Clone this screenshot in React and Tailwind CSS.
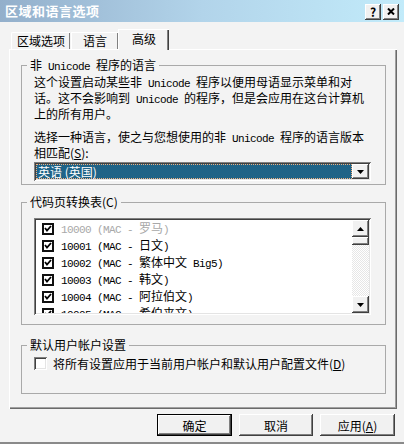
import React from 'react';

const FONT = { fontFamily: '"Noto Sans CJK SC", "Liberation Sans", sans-serif' };

const RAISED =
  'bg-[#f1f1f1] shadow-[inset_-1px_-1px_#404040,inset_1px_1px_#ffffff,inset_-2px_-2px_#808080]';
const SUNKEN =
  'shadow-[inset_1px_1px_#808080,inset_-1px_-1px_#ffffff,inset_2px_2px_#404040,inset_-2px_-2px_#e4e4e4]';

const CODE_PAGES = [
  { code: '10000', name: '罗马', muted: true },
  { code: '10001', name: '日文' },
  { code: '10002', name: '繁体中文', extra: ' Big5' },
  { code: '10003', name: '韩文' },
  { code: '10004', name: '阿拉伯文' },
  { code: '10005', name: '希伯来文' },
];

// latin runs in the bitmap font are fixed 6px wide
function L({ children }) {
  return (
    <span className="font-['Liberation_Mono',monospace] text-[11px] tracking-[-0.6px] whitespace-pre">
      {children}
    </span>
  );
}

function Arrow({ up }) {
  return (
    <svg width="7" height="4" viewBox="0 0 7 4" className="block">
      <path d={up ? 'M3.5 0 L7 4 L0 4 Z' : 'M0 0 L7 0 L3.5 4 Z'} fill="#000" />
    </svg>
  );
}

function GroupBox({ title, className, children }) {
  return (
    <div className={`relative mx-[11px] border border-[#a9a9a9] ${className}`}>
      <span className="absolute left-[5px] -top-[8px] bg-[#f3f3f3] px-[3px] text-[12px] leading-[14px] text-black">
        {title}
      </span>
      {children}
    </div>
  );
}

function ListCheck() {
  return (
    <div className="w-[12px] h-[12px] border-2 border-[#101010] bg-white flex items-center justify-center shrink-0">
      <svg width="8" height="7" viewBox="0 0 8 7">
        <path d="M1 3 L3 5.5 L7 1" stroke="#000" strokeWidth="1.8" fill="none" />
      </svg>
    </div>
  );
}

export default function App() {
  return (
    <div
      className="relative w-[404px] h-[444px] overflow-hidden bg-[#f3f3f3] text-black border-b-2 border-[#8a8a8a]"
      style={FONT}
    >
      {/* Title bar */}
      <div className="h-[22px] flex items-center justify-between bg-gradient-to-r from-[#93afcb] via-[#b2d4ea] to-[#c2ebfa]">
        <span className="pl-[5px] text-[13px] font-bold text-white leading-[16px] tracking-[0.5px]">
          区域和语言选项
        </span>
        <div className="flex gap-[2px] pr-[5px] pt-[1px]">
          <div className={`w-[16px] h-[16px] flex items-center justify-center text-[12px] font-bold leading-none ${RAISED}`}>
            ?
          </div>
          <div className={`w-[16px] h-[16px] flex items-center justify-center ${RAISED}`}>
            <svg width="8" height="7" viewBox="0 0 8 7">
              <path d="M1 0.5 L7 6.5 M7 0.5 L1 6.5" stroke="#000" strokeWidth="2" />
            </svg>
          </div>
        </div>
      </div>

      {/* Tabs */}
      <div className="flex items-end pl-[11px] mt-[7px] h-[20px] relative z-10">
        <div className="h-[17px] w-[59px] flex items-center justify-center text-[12px] leading-[14px] border-l border-t border-white shadow-[inset_-1px_0_#808080] rounded-tl-[2px]">
          区域选项
        </div>
        <div className="h-[17px] w-[47px] ml-[1px] flex items-center justify-center text-[12px] leading-[14px] border-l border-t border-white shadow-[inset_-1px_0_#808080]">
          语言
        </div>
        <div className="h-[21px] w-[51px] -mb-[1px] flex items-start justify-center pt-[2px] bg-[#f3f3f3] text-[12px] leading-[14px] border-l border-t border-white shadow-[inset_-1px_0_#404040,inset_-2px_0_#808080]">
          高级
        </div>
      </div>

      {/* Tab panel */}
      <div className="ml-[9px] w-[388px] h-[360px] border-t border-l border-white shadow-[inset_-1px_-1px_#6a6a6a,inset_-2px_-2px_#a0a0a0] flex flex-col">
        <GroupBox
          title={<>非<L> Unicode </L>程序的语言</>}
          className="mt-[15px] h-[120px]"
        >
          <div className="pl-[12px] pt-[9px] text-[12px] leading-[13px]">
            <p>
              这个设置启动某些非<L> Unicode </L>程序以便用母语显示菜单和对
              <br />
              话。这不会影响到<L> Unicode </L>的程序，但是会应用在这台计算机
              <br />
              上的所有用户。
            </p>
            <p className="mt-[10px]">
              选择一种语言，使之与您想使用的非<L> Unicode </L>程序的语言版本
              <br />
              相匹配(<span className="underline">S</span>):
            </p>
          </div>
          <div className={`ml-[12px] mt-[3px] w-[337px] h-[19px] bg-white flex p-[2px] ${SUNKEN}`}>
            <div className="flex-1 bg-[#1f6387] border border-dotted border-[#f0b080] text-white text-[12px] leading-[13px] pl-[1px]">
              英语 (英国)
            </div>
            <div className={`w-[17px] flex items-center justify-center ${RAISED}`}>
              <Arrow />
            </div>
          </div>
        </GroupBox>

        <GroupBox title="代码页转换表(C)" className="mt-[17px] h-[123px]">
          <div className={`ml-[12px] mt-[15px] w-[337px] h-[97px] bg-white flex p-[2px] ${SUNKEN}`}>
            <div className="flex-1 overflow-hidden">
              {CODE_PAGES.map((cp) => (
                <div key={cp.code} className="h-[17px] flex items-center pl-[6px] gap-[7px] text-[12px] leading-[13px]">
                  <ListCheck />
                  <span className={cp.muted ? 'text-[#a8a8a8]' : 'text-black'}>
                    <L>{`${cp.code} (MAC - `}</L>
                    {cp.name}
                    {cp.extra && <L>{cp.extra}</L>}
                    <L>)</L>
                  </span>
                </div>
              ))}
            </div>
            <div className="w-[17px] flex flex-col bg-[repeating-conic-gradient(#ffffff_0_25%,#e6e6e6_0_50%)] bg-[length:2px_2px]">
              <div className={`h-[17px] flex items-center justify-center ${RAISED}`}>
                <Arrow up />
              </div>
              <div className={`h-[8px] ${RAISED}`} />
              <div className="flex-1" />
              <div className={`h-[17px] flex items-center justify-center ${RAISED}`}>
                <Arrow />
              </div>
            </div>
          </div>
        </GroupBox>

        <GroupBox title="默认用户帐户设置" className="mt-[20px] h-[49px]">
          <div className="flex items-center pl-[12px] pt-[11px] gap-[6px] text-[12px] leading-[13px]">
            <div className={`w-[13px] h-[13px] bg-white ${SUNKEN}`} />
            <span>
              将所有设置应用于当前用户帐户和默认用户配置文件(<span className="underline">D</span>)
            </span>
          </div>
        </GroupBox>
      </div>

      {/* Buttons */}
      <div className="flex justify-end gap-[7px] pr-[9px] mt-[5px] text-[12px] leading-[13px]">
        <div className="w-[75px] h-[22px] border border-black">
          <div className={`w-full h-full flex items-center justify-center ${RAISED}`}>确定</div>
        </div>
        <div className={`w-[74px] h-[22px] flex items-center justify-center ${RAISED}`}>取消</div>
        <div className={`w-[75px] h-[22px] flex items-center justify-center ${RAISED}`}>
          应用(<span className="underline">A</span>)
        </div>
      </div>
    </div>
  );
}
